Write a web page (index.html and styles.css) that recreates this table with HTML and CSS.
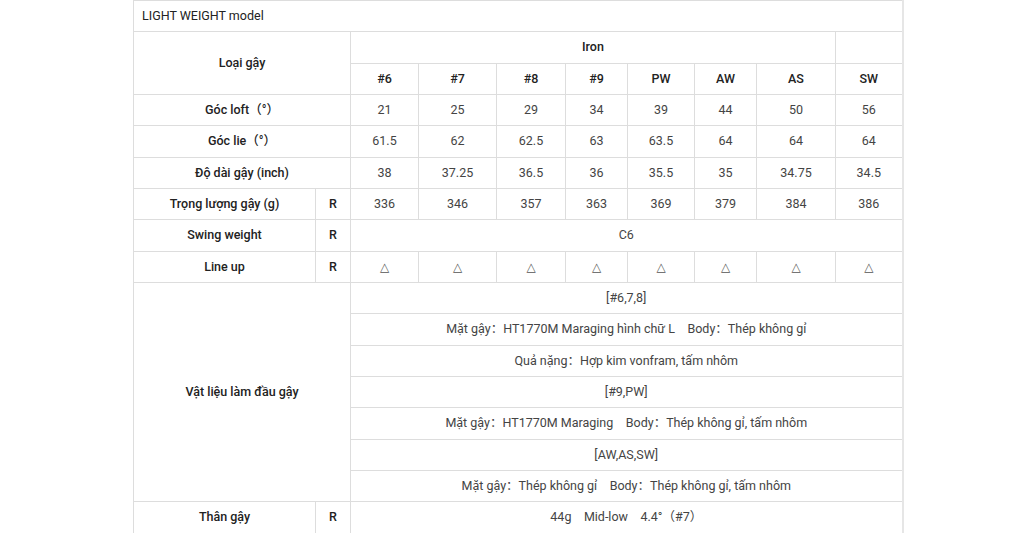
FILE: index.html
```html
<!DOCTYPE html>
<html lang="vi">
<head>
<meta charset="utf-8">
<title>LIGHT WEIGHT model</title>
<link rel="stylesheet" href="styles.css">
</head>
<body>
<table class="spec">
  <colgroup>
    <col class="c-label"><col class="c-flex">
    <col class="c1"><col class="c2"><col class="c3"><col class="c4">
    <col class="c5"><col class="c6"><col class="c7"><col class="c8">
  </colgroup>
  <tr><td class="title" colspan="10">LIGHT WEIGHT model</td></tr>
  <tr>
    <th colspan="2" rowspan="2">Loại gậy</th>
    <th colspan="7">Iron</th>
    <th></th>
  </tr>
  <tr>
    <th>#6</th><th>#7</th><th>#8</th><th>#9</th><th>PW</th><th>AW</th><th>AS</th><th>SW</th>
  </tr>
  <tr>
    <th colspan="2">Góc loft（°）</th>
    <td>21</td><td>25</td><td>29</td><td>34</td><td>39</td><td>44</td><td>50</td><td>56</td>
  </tr>
  <tr>
    <th colspan="2">Góc lie（°）</th>
    <td>61.5</td><td>62</td><td>62.5</td><td>63</td><td>63.5</td><td>64</td><td>64</td><td>64</td>
  </tr>
  <tr>
    <th colspan="2">Độ dài gậy (inch)</th>
    <td>38</td><td>37.25</td><td>36.5</td><td>36</td><td>35.5</td><td>35</td><td>34.75</td><td>34.5</td>
  </tr>
  <tr>
    <th>Trọng lượng gậy (g)</th><th>R</th>
    <td>336</td><td>346</td><td>357</td><td>363</td><td>369</td><td>379</td><td>384</td><td>386</td>
  </tr>
  <tr>
    <th>Swing weight</th><th>R</th>
    <td colspan="8">C6</td>
  </tr>
  <tr>
    <th>Line up</th><th>R</th>
    <td class="tri">△</td><td class="tri">△</td><td class="tri">△</td><td class="tri">△</td>
    <td class="tri">△</td><td class="tri">△</td><td class="tri">△</td><td class="tri">△</td>
  </tr>
  <tr>
    <th colspan="2" rowspan="7">Vật liệu làm đầu gậy</th>
    <td colspan="8">[#6,7,8]</td>
  </tr>
  <tr><td colspan="8">Mặt gậy：HT1770M Maraging hình chữ L　Body：Thép không gỉ</td></tr>
  <tr><td colspan="8">Quả nặng：Hợp kim vonfram, tấm nhôm</td></tr>
  <tr><td colspan="8">[#9,PW]</td></tr>
  <tr><td colspan="8">Mặt gậy：HT1770M Maraging　Body：Thép không gỉ, tấm nhôm</td></tr>
  <tr><td colspan="8">[AW,AS,SW]</td></tr>
  <tr><td colspan="8">Mặt gậy：Thép không gỉ　Body：Thép không gỉ, tấm nhôm</td></tr>
  <tr>
    <th>Thân gậy</th><th>R</th>
    <td colspan="8">44g　Mid-low　4.4°（#7）</td>
  </tr>
</table>
</body>
</html>
```

FILE: styles.css
```css
html, body {
  margin: 0;
  padding: 0;
  background: #ffffff;
}

body {
  font-family: Roboto, "Noto Sans CJK SC", sans-serif;
  font-size: 12.5px;
  color: #333333;
}

.spec {
  margin-left: 133px;
  width: 770px;
  table-layout: fixed;
  border-collapse: collapse;
  border: 1px solid #dddddd;
  border-right: 2px solid #e6e6e6;
}

.c-label { width: 182px; }
.c-flex { width: 35px; }
.c1 { width: 68px; }
.c2 { width: 78px; }
.c3 { width: 69px; }
.c4 { width: 62px; }
.c5 { width: 67px; }
.c6 { width: 62px; }
.c7 { width: 79px; }
.c8 { width: 67px; }

.spec th,
.spec td {
  border: 1px solid #dddddd;
  padding: 5px 4px;
  line-height: 20.33px;
  text-align: center;
  vertical-align: middle;
}

.spec th {
  font-weight: 500;
  color: #222222;
}

.spec td {
  font-weight: 400;
  color: #444444;
}

.spec td.title {
  text-align: left;
  padding-left: 8px;
  color: #222222;
  height: 19px;
}

.spec td.tri {
  font-family: "DejaVu Sans", sans-serif;
  font-size: 12px;
  color: #555555;
}
```
